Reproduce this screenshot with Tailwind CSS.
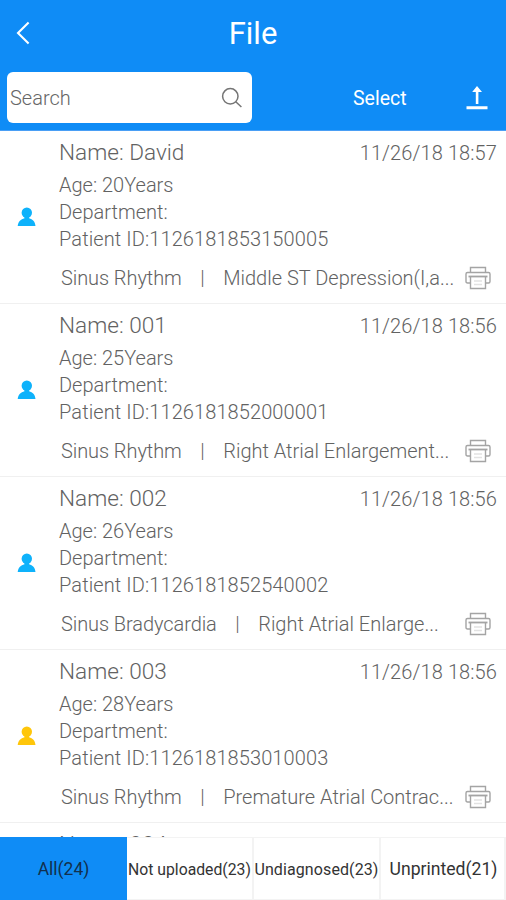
<!DOCTYPE html>
<html lang="en">
<head>
<meta charset="utf-8">
<title>File</title>
<script src="https://cdn.jsdelivr.net/npm/@tailwindcss/browser@4"></script>
</head>
<body class="bg-white font-['Roboto',sans-serif]">
<div class="w-[506px] h-[900px] flex flex-col overflow-hidden">
  <header class="h-[131px] shrink-0 bg-[#0f8cf6] text-white border-b border-[#4a9ff5]">
    <div class="h-[72px] grid grid-cols-[1fr_auto_1fr] items-center pb-[6px]">
      <svg class="ml-[15px]" width="16" height="24" viewBox="0 0 16 24" fill="none" stroke="#fff" stroke-width="2.1"><path d="M13.6 1.5 3 12l10.600 10.500"/></svg>
      <h1 class="text-[31px] leading-[40px] pt-[2px]">File</h1>
    </div>
    <div class="flex items-center h-[51px]">
      <div class="ml-[7px] w-[245px] h-[51px] rounded-[6px] bg-white flex items-center justify-between pl-[3px] pr-[9px]">
        <span class="text-[20px] font-light text-[#666]">Search</span>
        <svg width="22" height="22" viewBox="0 0 22 22" fill="none" stroke="#757575" stroke-width="1.5"><circle cx="9.300" cy="9.300" r="7.700"/><path d="m14.800 14.800 5.600 5.200"/></svg>
      </div>
      <span class="ml-[101px] text-[19.500px] pt-[2px]">Select</span>
      <svg class="ml-auto mr-[18px]" width="22" height="24" viewBox="0 0 22 24" fill="#fff"><path d="M11 0 16 6h-3.600V18H9.800V6H6.200zM0.500 20.300h21v2.900H.5z"/></svg>
    </div>
  </header>
  <main id="list" class="flex-1 min-h-0 overflow-hidden"></main>
  <nav class="h-[63px] shrink-0 flex text-[#333] items-stretch whitespace-nowrap">
    <div class="w-[127px] bg-[#0f8cf6] flex items-center justify-center text-[17.500px] text-[#12304d] pt-[2px]">All(24)</div>
    <div class="w-[127px] border-t border-b border-r-2 border-[#f3f3f3] flex items-center justify-center text-[15.750px] pt-[2px]">Not uploaded(23)</div>
    <div class="w-[127px] border-t border-b border-r-2 border-[#f3f3f3] flex items-center justify-center text-[16px] tracking-[0.1px] pt-[2px]">Undiagnosed(23)</div>
    <div class="w-[125px] border-t border-b border-r-2 border-[#f3f3f3] flex items-center justify-center text-[17.600px] pt-[2px] pl-[2px]">Unprinted(21)</div>
  </nav>
</div>
<script>
const rows = [
  ["David","57","20","1126181853150005","Sinus Rhythm","Middle ST Depression(I,a...","text-[#0eb2fb]"],
  ["001","56","25","1126181852000001","Sinus Rhythm","Right Atrial Enlargement...","text-[#0eb2fb]"],
  ["002","56","26","1126181852540002","Sinus Bradycardia","Right Atrial Enlarge...","text-[#0eb2fb]"],
  ["003","56","28","1126181853010003","Sinus Rhythm","Premature Atrial Contrac...","text-[#ffc60a]"],
  ["004","56","30","1126181853020004","Sinus Rhythm","Normal ECG","text-[#0eb2fb]"]
];
document.getElementById("list").innerHTML = rows.map(([n,m,a,id,d1,d2,c]) => `
<article class="h-[173px] border-b border-[#f0f0f0] flex text-[#626262] font-light text-[20px] whitespace-nowrap">
  <div class="w-[59px] shrink-0 flex items-center pl-[17px]">
    <svg class="${c}" width="19" height="20" viewBox="0 0 19 20" fill="currentColor"><circle cx="9.800" cy="5.800" r="5.200"/><path d="M7.500 9h4.600v2.300c3.500 1.100 6 3.300 6.400 7.700H.7c.5-4.400 3.200-6.600 6.800-7.700z"/></svg>
  </div>
  <div class="flex-1 flex flex-col pr-[9px]">
    <div class="h-[41px] flex items-center justify-between pt-[2px]">
      <span class="text-[22.600px]">Name: ${n}</span><span class="tracking-[0.1px]">11/26/18 18:${m}</span>
    </div>
    <div class="leading-[27px]"><p>Age: ${a}Years</p><p>Department:</p><p class="tracking-[0.1px]">Patient ID:${id}</p></div>
    <div class="mt-[10px] h-[30px] pl-[2px] pr-[6px] flex items-center">
      <span class="tracking-[-0.080px]">${d1}</span><span class="mx-[18.500px]">|</span><span>${d2}</span>
      <svg class="ml-auto" width="26" height="24" viewBox="0 0 26 24" fill="none" stroke="#a4a4a4" stroke-width="1.400"><path d="M5.500 6.500V1.500h15v5"/><path d="M5.500 17H2.500q-1.500 0-1.500-1.500V8q0-1.500 1.500-1.500h21Q25 6.500 25 8v7.500q0 1.500-1.500 1.500h-3"/><path d="M3.500 10.500h19" stroke-width="1.800"/><path d="M5.500 10.500v12h15v-12" /><path d="M9 15h8M9 18.500h8" stroke="#e2e2e2"/></svg>
    </div>
  </div>
</article>`).join("");
</script>
</body>
</html>
